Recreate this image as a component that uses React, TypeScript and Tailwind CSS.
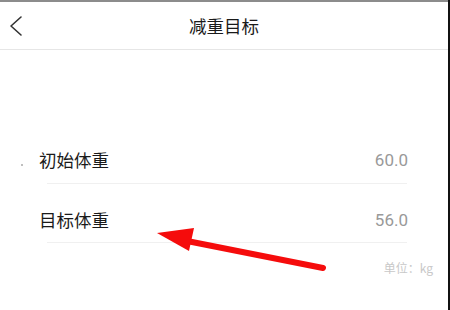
import React from "react";

const font = { fontFamily: '"Noto Sans CJK SC", "Noto Sans", sans-serif' };
const num = { fontFamily: '"Roboto", "Liberation Sans", sans-serif' };

export default function App() {
  return (
    <div
      className="relative w-[450px] h-[310px] bg-white overflow-hidden flex"
      style={font}
    >
      <div className="flex-1 flex flex-col">
        <div className="h-[2px] bg-[#8c8c8c]" />
        <div className="relative h-[48px] border-b border-[#e6e6e6] flex items-center justify-center">
          <div className="absolute left-[9px] top-[13px]">
            <svg width="14" height="22" viewBox="0 0 14 22">
              <polyline
                points="12,2 2,11 12,20"
                fill="none"
                stroke="#333"
                strokeWidth="1.6"
                strokeLinecap="round"
                strokeLinejoin="round"
              />
            </svg>
          </div>
          <span className="text-[17.5px] text-[#1a1a1a] leading-none">减重目标</span>
        </div>

        <div className="h-[75px]" />

        <div className="h-[58px] flex items-end pb-[11px] pl-[21px] pr-[40px]">
          <div className="w-[2px] h-[2px] rounded-full bg-[#aaa] mr-[16px] mb-[6px]" />
          <span className="flex-1 text-[17.5px] text-[#1a1a1a] leading-[24px]">初始体重</span>
          <span className="text-[17px] text-[#999] leading-[24px]" style={num}>
            60.0
          </span>
        </div>
        <div className="h-px bg-[#f0f0f0] ml-[47px] mr-[41px]" />

        <div className="h-[58px] flex items-end pb-[10px] pl-[39px] pr-[40px]">
          <span className="flex-1 text-[17.5px] text-[#1a1a1a] leading-[24px]">目标体重</span>
          <span className="text-[17px] text-[#999] leading-[24px]" style={num}>
            56.0
          </span>
        </div>
        <div className="h-px bg-[#f0f0f0] ml-[47px] mr-[41px]" />

        <div className="flex justify-end pr-[15px] pt-[19px]">
          <span className="text-[12px] text-[#c8c8c8] leading-none">单位：kg</span>
        </div>
      </div>
      <div className="w-[2px] bg-[#111]" />

      <svg
        className="absolute left-0 top-0 pointer-events-none"
        width="450"
        height="310"
        viewBox="0 0 450 310"
      >
        <line
          x1="182"
          y1="240"
          x2="323"
          y2="268"
          stroke="#f50c0c"
          strokeWidth="6"
          strokeLinecap="round"
        />
        <polygon points="157,233 194,228 189,251" fill="#f50c0c" />
      </svg>
    </div>
  );
}
